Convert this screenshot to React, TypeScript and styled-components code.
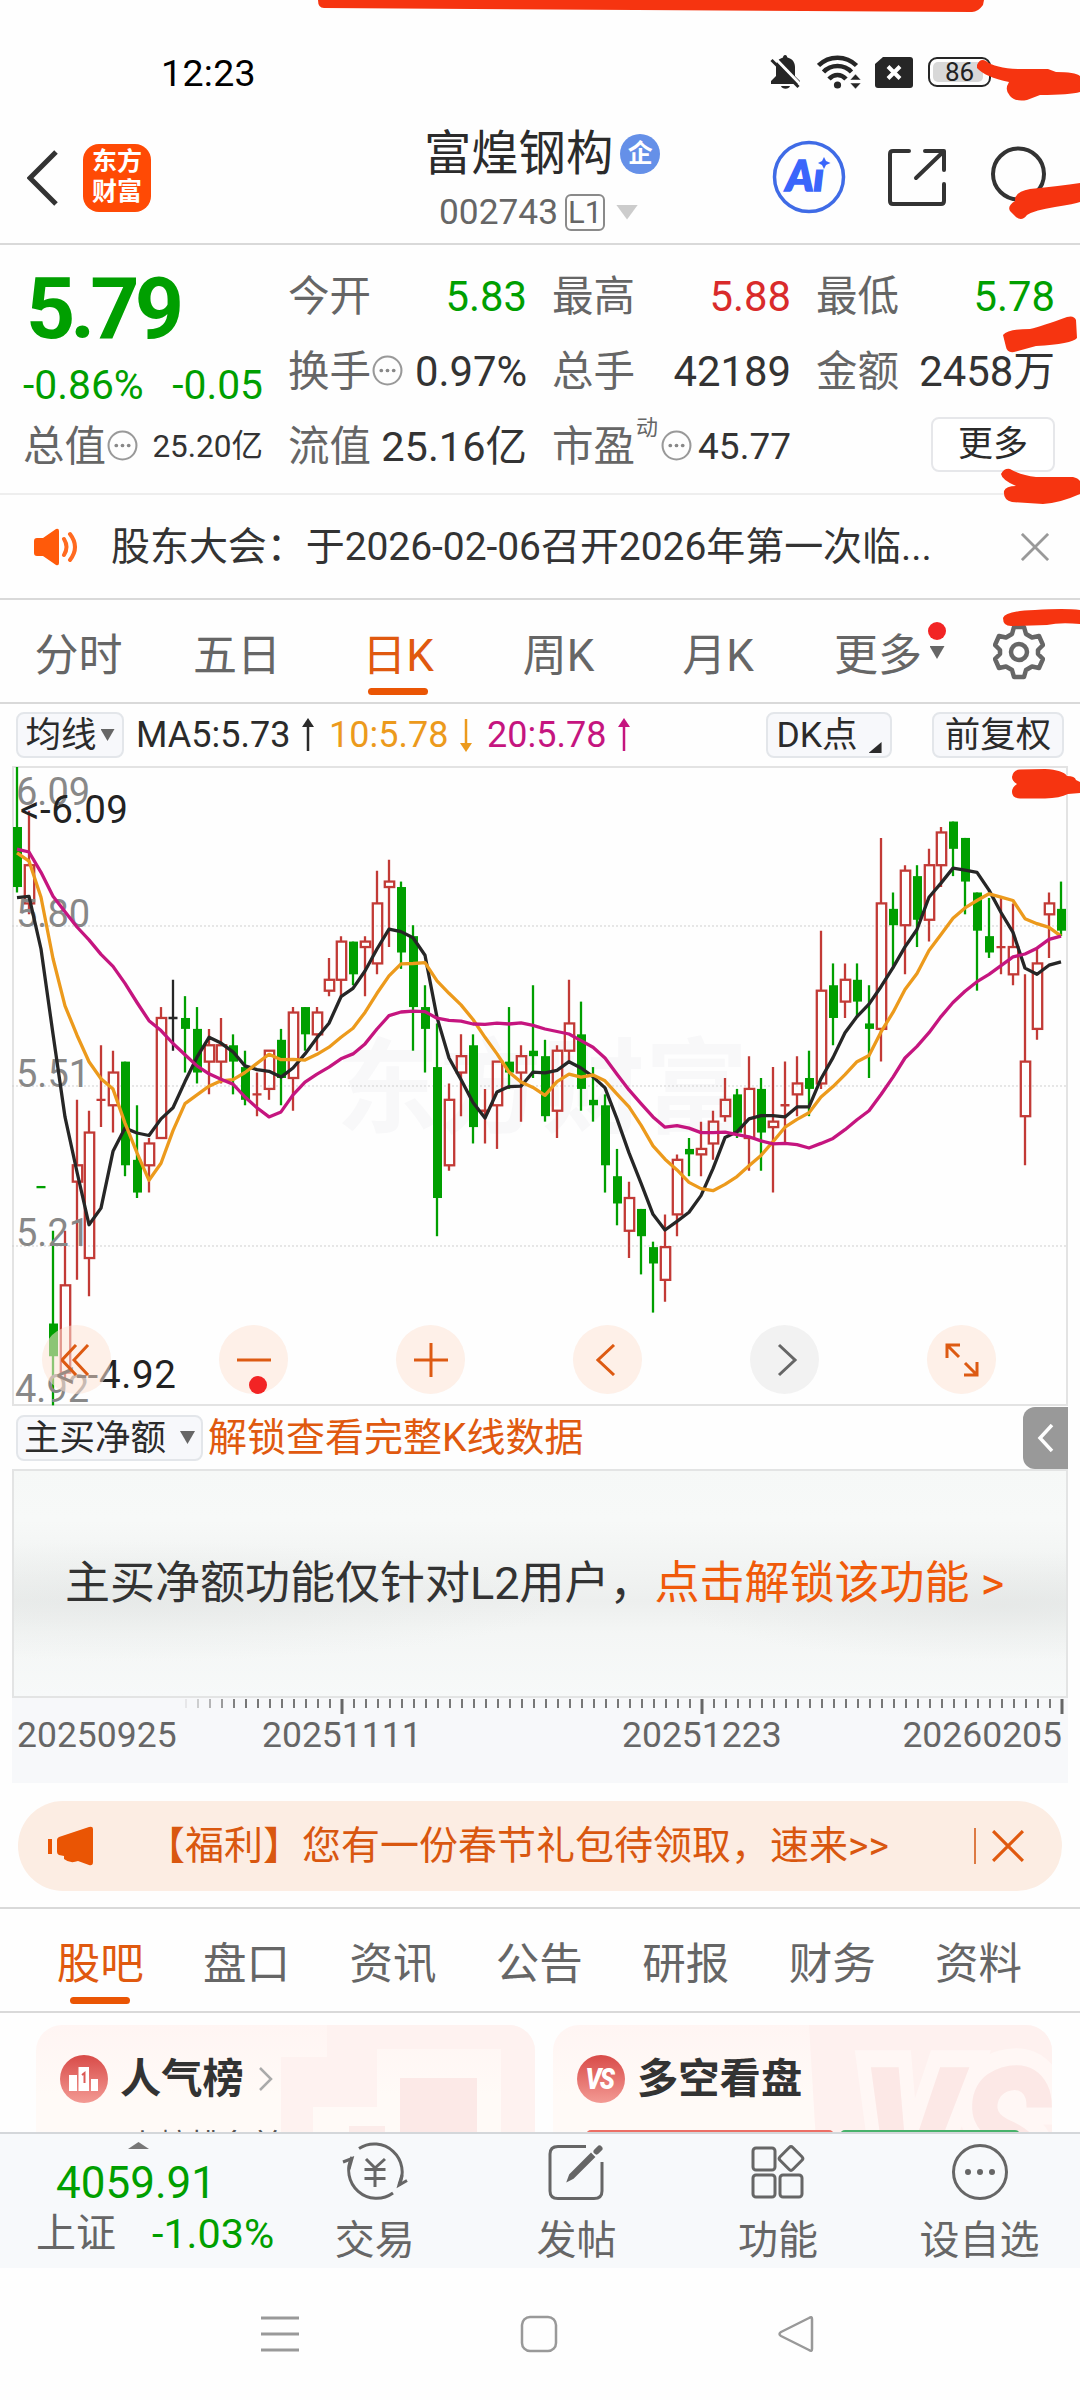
import React from 'react';
import styled, { createGlobalStyle } from 'styled-components';

const C = {
  ink: '#2b2b2b',
  text: '#333333',
  grey: '#666666',
  green: '#009f00',
  red: '#d92b2b',
  orange: '#e0590f',
  brand: '#ea5504',
  line: '#d9d9d9',
  candleRed: '#c23a36',
  ma5: '#262626',
  ma10: '#ec9a1c',
  ma20: '#c5157f',
  marker: '#f63410',
};

const Global = createGlobalStyle`
  *, *::before, *::after { box-sizing: border-box; }
  html, body { margin: 0; padding: 0; background: #fff; }
  body { font-family: Roboto, "Noto Sans CJK SC", sans-serif; color: ${C.text}; }
  svg { display: block; flex: none; }
`;

const Screen = styled.div`
  position: relative;
  width: 1080px;
  height: 2400px;
  overflow: hidden;
  background: #fefefe;
  display: flex;
  flex-direction: column;
  white-space: nowrap;
`;

/* ---------- status bar ---------- */
const StatusBar = styled.div`
  height: 110px;
  flex: none;
  padding: 36px 88px 0 161px;
  display: flex;
  align-items: center;
  justify-content: space-between;
`;
const Clock = styled.span`
  font-size: 37.5px;
  line-height: 44px;
  color: #000;
  letter-spacing: 0.3px;
`;
const StatusIcons = styled.div`
  display: flex;
  align-items: center;
  width: 222px;
  padding-bottom: 2px;
`;
const Battery = styled.span`
  width: 63px;
  height: 30px;
  margin-left: 15px;
  border: 2px solid #262626;
  border-radius: 9px;
  padding: 3px;
  display: flex;
`;
const BatteryFill = styled.span`
  width: 50px;
  border-radius: 5px;
  background: #d8d8d8;
  font-size: 26px;
  line-height: 21px;
  text-align: center;
  color: #222;
  padding-left: 3px;
`;

/* ---------- header ---------- */
const Header = styled.header`
  height: 135px;
  flex: none;
  border-bottom: 2px solid ${C.line};
  display: grid;
  grid-template-columns: 27px 56px 341px 300px 1fr;
  align-items: start;
`;
const HeaderCell = styled.div<{ $top: number }>`
  padding-top: ${(p) => p.$top}px;
`;
const Logo = styled.div`
  width: 68px;
  height: 68px;
  border-radius: 16px;
  background: #ff4a05;
  color: #fff;
  font-weight: 700;
  font-size: 25px;
  line-height: 30px;
  text-align: center;
  padding-top: 3px;
`;
const TitleBlock = styled.div`
  display: flex;
  flex-direction: column;
  padding-top: 17px;
`;
const TitleRow = styled.div`
  display: flex;
  align-items: center;
  height: 54px;
  font-size: 47.3px;
  line-height: 54px;
  color: ${C.ink};
`;
const EntBadge = styled.span`
  width: 40px;
  height: 40px;
  margin-left: 7px;
  border-radius: 50%;
  background: #6590e8;
  color: #fff;
  font-size: 25px;
  font-weight: 700;
  line-height: 39px;
  text-align: center;
`;
const CodeRow = styled.div`
  display: flex;
  align-items: center;
  height: 44px;
  margin-top: 9px;
  padding-left: 15px;
  font-size: 35.3px;
  color: ${C.grey};
  line-height: 44px;
`;
const LevelTag = styled.span`
  width: 40px;
  height: 37px;
  margin-left: 7px;
  margin-right: 11px;
  border: 2px solid #8a8a8a;
  border-radius: 6px;
  font-size: 31px;
  line-height: 34px;
  text-align: center;
`;
const Actions = styled.div`
  display: flex;
  align-items: flex-start;
  padding-left: 48px;
`;

const Tri = styled.i<{ $w: number; $h: number; $c: string; $up?: boolean; $ml?: number }>`
  width: ${(p) => p.$w}px;
  height: ${(p) => p.$h}px;
  margin-left: ${(p) => p.$ml || 0}px;
  flex: none;
  background: ${(p) => p.$c};
  clip-path: ${(p) => (p.$up ? 'polygon(50% 0, 100% 100%, 0 100%)' : 'polygon(0 0, 100% 0, 50% 100%)')};
`;

/* ---------- quote ---------- */
const Quote = styled.section`
  height: 250px;
  flex: none;
  border-bottom: 2px solid #eeeeee;
  padding: 14px 24px 0 23px;
  display: grid;
  grid-template-columns: 240px repeat(3, 239px);
  grid-template-rows: repeat(3, 75px);
  column-gap: 25px;
`;
const PriceCell = styled.div`
  grid-row: span 2;
  display: flex;
  flex-direction: column;
  color: ${C.green};
`;
const Price = styled.div`
  height: 99px;
  line-height: 99px;
  font-size: 86px;
  font-weight: 700;
  letter-spacing: -5px;
  padding-left: 3px;
`;
const Delta = styled.div`
  display: flex;
  justify-content: space-between;
  height: 54px;
  line-height: 54px;
  font-size: 40.8px;
`;
const Stat = styled.div`
  display: flex;
  align-items: center;
  justify-content: space-between;
`;
const StatLabel = styled.span`
  display: flex;
  align-items: center;
  font-size: 41.5px;
  line-height: 60px;
  color: ${C.grey};
`;
const Sup = styled.sup`
  font-size: 22px;
  line-height: 22px;
  margin: -38px 2px 0 1px;
  color: ${C.grey};
`;
const StatValue = styled.span<{ $c?: string; $s?: number }>`
  font-size: ${(p) => p.$s || 41.8}px;
  line-height: 60px;
  color: ${(p) => p.$c || C.text};
`;
const MoreButton = styled.button`
  width: 124px;
  height: 55px;
  margin-left: auto;
  margin-top: -4px;
  padding: 0;
  font: inherit;
  font-size: 35px;
  line-height: 49px;
  color: ${C.ink};
  background: #fff;
  border: 2px solid #e6e7ea;
  border-radius: 8px;
`;

/* ---------- notice ---------- */
const Notice = styled.section`
  height: 105px;
  flex: none;
  border-bottom: 2px solid ${C.line};
  padding: 0 31px 0 34px;
  display: flex;
  align-items: center;
`;
const NoticeText = styled.span`
  flex: 1;
  padding-left: 31px;
  font-size: 39px;
  line-height: 60px;
  letter-spacing: -0.06px;
`;

/* ---------- period tabs ---------- */
const PeriodTabs = styled.nav`
  height: 104px;
  flex: none;
  border-bottom: 2px solid ${C.line};
  display: flex;
  align-items: stretch;
`;
const Tab = styled.div<{ $w: number; $active?: boolean; $size?: number }>`
  position: relative;
  width: ${(p) => p.$w}px;
  flex: none;
  display: flex;
  flex-direction: column;
  align-items: center;
  justify-content: center;
  padding-top: 9px;
  font-size: ${(p) => p.$size || 44}px;
  line-height: 60px;
  color: ${(p) => (p.$active ? C.orange : C.grey)};
  &::after {
    content: '';
    display: ${(p) => (p.$active ? 'block' : 'none')};
    position: absolute;
    bottom: 7px;
    width: 60px;
    height: 7px;
    border-radius: 4px;
    background: ${C.brand};
  }
`;
const TabMarks = styled.span`
  position: absolute;
  left: 130px;
  top: 22px;
  display: flex;
  flex-direction: column;
  align-items: center;
  gap: 6px;
`;
const Dot = styled.i`
  width: 18px;
  height: 18px;
  border-radius: 50%;
  background: #f22424;
`;
const GearCell = styled.div`
  padding: 24px 0 0 35px;
`;

/* ---------- indicator bar ---------- */
const Indicators = styled.div`
  height: 62px;
  flex: none;
  padding: 0 16px;
  display: flex;
  align-items: center;
`;
const Chip = styled.span<{ $w: number; $ml?: number }>`
  width: ${(p) => p.$w}px;
  height: 46px;
  margin-left: ${(p) => p.$ml || 0}px;
  flex: none;
  display: flex;
  align-items: center;
  justify-content: center;
  background: #f7f8fb;
  border: 2px solid #e3e6ea;
  border-radius: 8px;
  font-size: 35.5px;
  line-height: 42px;
  color: ${C.ink};
`;
const MaText = styled.span<{ $c: string; $ml: number; $w: number }>`
  width: ${(p) => p.$w}px;
  margin-left: ${(p) => p.$ml}px;
  font-size: 36px;
  line-height: 44px;
  color: ${(p) => p.$c};
  display: flex;
  align-items: center;
  justify-content: space-between;
`;
const Corner = styled.i`
  width: 13px;
  height: 11px;
  align-self: flex-end;
  margin: 0 0 3px 11px;
  background: ${C.ink};
  clip-path: polygon(100% 0, 100% 100%, 0 100%);
`;

/* ---------- chart ---------- */
const ChartBox = styled.section`
  position: relative;
  width: 1056px;
  height: 640px;
  margin-left: 12px;
  flex: none;
`;
const Controls = styled.div`
  position: absolute;
  left: 30px;
  top: 559px;
  display: flex;
  gap: 108px;
`;
const RoundButton = styled.span<{ $grey?: boolean }>`
  position: relative;
  width: 69px;
  height: 69px;
  border-radius: 50%;
  background: ${(p) => (p.$grey ? '#f2f2f2' : 'rgba(253, 228, 214, 0.55)')};
  display: flex;
  align-items: center;
  justify-content: center;
`;
const ButtonDot = styled(Dot)`
  position: absolute;
  left: 30px;
  bottom: 0;
`;

/* ---------- sub chart ---------- */
const SubHeader = styled.div`
  height: 63px;
  flex: none;
  padding-left: 16px;
  padding-right: 12px;
  display: flex;
  align-items: center;
`;
const UnlockText = styled.span`
  flex: 1;
  margin-left: 5px;
  font-size: 39px;
  line-height: 56px;
  color: ${C.orange};
`;
const Drawer = styled.span`
  width: 45px;
  height: 62px;
  border-radius: 12px 0 0 12px;
  background: #999;
  display: flex;
  align-items: center;
  justify-content: center;
`;
const Locked = styled.div`
  height: 229px;
  flex: none;
  margin: 0 12px;
  padding-left: 51px;
  border: 2px solid #e3e4e4;
  background:
    radial-gradient(ellipse 420px 60px at 12% 58%, rgba(225, 228, 227, 0.5), rgba(225, 228, 227, 0)),
    radial-gradient(ellipse 320px 55px at 94% 60%, rgba(225, 228, 227, 0.6), rgba(225, 228, 227, 0)),
    linear-gradient(#f6f8f7, #f7f9f8 22%, #f1f3f2 45%, #edefee 58%, #f4f6f5 72%, #f7f9f9 100%);
  font-size: 45px;
  line-height: 225px;
`;
const LockedLink = styled.span`
  color: #f05a0a;
`;
const Axis = styled.div`
  height: 85px;
  flex: none;
  margin: 0 12px;
  background: #f7f8fa;
`;
const AxisLabels = styled.div`
  display: grid;
  grid-template-columns: 245px 360px 1fr 165px;
  padding-left: 5px;
  padding-right: 6px;
  margin-top: -12px;
  font-size: 35.5px;
  line-height: 60px;
  color: ${C.grey};
`;
const RightLabel = styled.span`
  text-align: right;
`;

/* ---------- promo ---------- */
const Promo = styled.div`
  height: 90px;
  flex: none;
  margin: 18px 18px 16px;
  padding: 0 38px 0 30px;
  border-radius: 45px;
  background: #fcede3;
  display: flex;
  align-items: center;
`;
const PromoText = styled.span`
  flex: 1;
  padding-left: 52px;
  font-size: 39px;
  line-height: 60px;
  color: #d9570f;
`;
const PromoRule = styled.i`
  width: 2px;
  height: 36px;
  margin-right: 16px;
  background: #dd7a44;
`;

const NewsTabs = styled.nav`
  height: 106px;
  flex: none;
  border-top: 2px solid ${C.line};
  border-bottom: 2px solid ${C.line};
  padding-left: 27px;
  display: flex;
`;

/* ---------- cards ---------- */
const Cards = styled.section`
  height: 119px;
  flex: none;
  padding: 12px 28px 0 36px;
  overflow: hidden;
  display: grid;
  grid-template-columns: 499px 499px;
  column-gap: 18px;
`;
const Card = styled.div`
  position: relative;
  height: 200px;
  overflow: hidden;
  border-radius: 26px;
  background: linear-gradient(#fff5f3, #fffaf7 35%);
`;
const CardArt = styled.svg`
  position: absolute;
  right: 0;
  top: 0;
`;
const CardHead = styled.div`
  position: relative;
  display: flex;
  align-items: center;
  height: 108px;
  padding-left: 24px;
  font-size: 41.3px;
  font-weight: 700;
  line-height: 60px;
`;
const CardIcon = styled.span`
  width: 48px;
  height: 48px;
  margin-right: 12px;
  border-radius: 50%;
  background: linear-gradient(#d84b48, #f39a94);
  display: flex;
  align-items: center;
  justify-content: center;
`;
const VsText = styled.b`
  color: #fff;
  font-size: 29px;
  font-style: italic;
  line-height: 48px;
  letter-spacing: -2px;
  padding-right: 4px;
  transform: scaleX(0.86);
`;
const CardHint = styled.div`
  position: relative;
  margin-top: -7px;
  padding-left: 92px;
  font-size: 31px;
  line-height: 40px;
  color: #555;
`;
const Bars = styled.div`
  position: relative;
  margin-top: -3px;
  display: flex;
  gap: 6px;
  padding-left: 33px;
`;
const Bar = styled.i<{ $w: number; $c: string }>`
  width: ${(p) => p.$w}px;
  height: 12px;
  border-radius: 5px 5px 0 0;
  background: ${(p) => p.$c};
`;

/* ---------- bottom ---------- */
const BottomBar = styled.footer`
  height: 136px;
  flex: none;
  background: #f7f9fb;
  border-top: 2px solid #d4d7da;
  display: grid;
  grid-template-columns: 274px repeat(4, 201.6px);
`;
const IndexCell = styled.div`
  display: flex;
  flex-direction: column;
  padding: 8px 0 0 36px;
`;
const IndexValue = styled.span`
  margin: 7px 0 0 20px;
  font-size: 44px;
  line-height: 55px;
  color: ${C.green};
`;
const IndexRow = styled.div`
  display: flex;
  gap: 36px;
  font-size: 40px;
  line-height: 46px;
  color: ${C.grey};
`;
const Down = styled.span`
  font-size: 41.3px;
  color: ${C.green};
`;
const ToolItem = styled.div`
  display: flex;
  flex-direction: column;
  align-items: center;
  padding-top: 5px;
  font-size: 40px;
  line-height: 60px;
  color: ${C.grey};
  svg { margin-bottom: 6px; }
`;
const NavBar = styled.div`
  flex: 1;
  padding: 47px 266px 0 261px;
  display: flex;
  justify-content: space-between;
  align-items: flex-start;
`;

const Scribbles = styled.svg`
  position: absolute;
  left: 0;
  top: 0;
  pointer-events: none;
`;

/* Candles: colour, high, body top, body bottom, low, in cents under the 6.09 ceiling. */
type Candle = [string, number, number, number, number];
const candles: Candle[] = [
  ['g', 0, 11, 22, 23], ['r', 8, 18, 25, 27], ['g', 77, 77, 77, 77], ['g', 85, 102, 108, 117],
  ['r', 85, 95, 111, 112], ['r', 61, 73, 76, 94], ['r', 63, 67, 90, 97], ['r', 51, 61, 61, 66],
  ['r', 52, 56, 62, 67], ['g', 54, 54, 73, 75], ['g', 62, 72, 78, 79], ['r', 68, 69, 73, 78],
  ['r', 44, 46, 68, 68], ['k', 39, 46, 46, 52], ['g', 42, 46, 48, 56], ['g', 44, 48, 56, 58],
  ['r', 48, 51, 54, 60], ['r', 46, 51, 54, 58], ['g', 49, 51, 54, 60], ['g', 52, 55, 61, 62],
  ['r', 56, 60, 60, 64], ['r', 52, 52, 59, 61], ['g', 48, 50, 57, 62], ['r', 44, 45, 57, 63],
  ['g', 44, 44, 49, 52], ['r', 44, 45, 49, 52], ['r', 35, 39, 41, 42], ['r', 31, 32, 39, 42],
  ['g', 32, 32, 38, 40], ['r', 31, 32, 33, 42], ['r', 19, 25, 36, 38], ['r', 17, 21, 22, 33],
  ['g', 21, 22, 34, 37], ['g', 29, 31, 44, 52], ['g', 40, 44, 48, 56], ['g', 47, 55, 79, 86],
  ['r', 58, 61, 73, 74], ['r', 49, 53, 56, 64], ['g', 49, 51, 66, 69], ['r', 59, 63, 63, 69],
  ['r', 54, 54, 62, 70], ['g', 44, 54, 56, 59], ['r', 51, 53, 56, 65], ['g', 40, 52, 53, 57],
  ['g', 50, 53, 64, 65], ['r', 51, 52, 63, 68], ['r', 39, 47, 52, 54], ['g', 43, 49, 59, 63],
  ['g', 55, 61, 62, 65], ['g', 60, 62, 73, 78], ['g', 70, 75, 80, 84], ['r', 76, 79, 85, 90],
  ['g', 81, 81, 86, 93], ['g', 87, 88, 91, 100], ['r', 82, 88, 94, 98], ['r', 71, 72, 82, 86],
  ['g', 68, 70, 71, 75], ['r', 65, 70, 71, 75], ['r', 63, 65, 69, 72], ['r', 57, 61, 64, 65],
  ['g', 59, 60, 67, 68], ['r', 53, 59, 68, 74], ['g', 57, 59, 67, 74], ['r', 55, 65, 66, 78],
  ['r', 54, 62, 62, 69], ['r', 53, 58, 60, 64], ['g', 52, 57, 59, 64], ['r', 30, 41, 58, 59],
  ['g', 36, 40, 46, 51], ['r', 36, 39, 43, 46], ['g', 36, 39, 43, 46], ['g', 40, 47, 48, 57],
  ['r', 13, 25, 48, 54], ['g', 23, 26, 29, 37], ['r', 18, 19, 29, 38], ['g', 18, 20, 28, 33],
  ['r', 15, 18, 28, 32], ['r', 11, 12, 18, 22], ['g', 10, 10, 15, 20], ['g', 13, 13, 21, 27],
  ['g', 23, 23, 30, 41], ['g', 24, 31, 34, 35], ['r', 24, 33, 33, 38], ['r', 25, 33, 38, 40],
  ['r', 38, 54, 64, 73], ['r', 33, 36, 48, 50], ['r', 23, 25, 27, 35], ['g', 21, 26, 30, 31],
];

/* Moving averages, on a scale where the plot runs from 16 to 1556. */
const ma5 = [331, 328, 455, 660, 860, 993, 1120, 1080, 943, 887, 899, 905, 865, 838, 775, 716, 668, 682, 703, 737, 746, 750, 764, 742, 708, 669, 634, 570, 550, 508, 455, 407, 413, 428, 470, 620, 718, 770, 825, 863, 800, 787, 786, 752, 754, 748, 727, 742, 763, 790, 865, 947, 1020, 1095, 1133, 1112, 1090, 1050, 985, 910, 896, 865, 857, 857, 860, 836, 836, 768, 717, 657, 618, 588, 546, 500, 450, 408, 330, 296, 260, 265, 270, 313, 367, 415, 501, 516, 494, 486];
const ma10 = [223, 243, 330, 478, 592, 663, 727, 768, 793, 875, 947, 1013, 972, 893, 828, 807, 786, 773, 770, 753, 731, 709, 722, 721, 723, 709, 692, 668, 646, 608, 562, 520, 491, 490, 488, 532, 562, 590, 625, 668, 708, 752, 776, 789, 808, 775, 757, 764, 759, 773, 805, 836, 880, 930, 962, 988, 1018, 1033, 1038, 1023, 1004, 978, 953, 920, 885, 866, 850, 812, 787, 758, 727, 712, 655, 608, 553, 514, 459, 420, 381, 356, 338, 322, 330, 338, 382, 394, 403, 424];
const ma20 = [214, 221, 270, 328, 365, 402, 433, 468, 497, 538, 584, 628, 652, 683, 710, 737, 756, 769, 781, 812, 838, 860, 848, 807, 776, 757, 740, 720, 708, 684, 648, 616, 607, 605, 606, 622, 627, 629, 636, 637, 634, 636, 633, 639, 648, 654, 660, 676, 692, 718, 757, 795, 828, 860, 885, 881, 887, 898, 898, 897, 903, 908, 918, 925, 924, 927, 935, 924, 912, 891, 867, 845, 806, 764, 718, 690, 657, 618, 584, 557, 534, 516, 495, 474, 467, 453, 432, 424];

const xAt = (i: number) => 5 + i * 12;
const yAt = (cents: number) => 1 + cents * 5.456;
const maPoints = (values: number[]) =>
  values.map((v, i) => `${xAt(i)},${(1 + (v - 16) / 2.4123).toFixed(1)}`).join(' ');

function CandleMark({ data, index }: { data: Candle; index: number }) {
  const [kind, high, top, bottom, low] = data;
  const x = xAt(index);
  const color = kind === 'g' ? C.green : kind === 'r' ? C.candleRed : C.ma5;
  if (top === bottom) {
    return (
      <g stroke={color} strokeWidth={2.3}>
        <path d={`M${x} ${yAt(high)}V${yAt(low)}M${x - 4.5} ${yAt(top)}h9`} />
      </g>
    );
  }
  const h = yAt(bottom) - yAt(top);
  if (kind === 'g') {
    return (
      <g>
        <path d={`M${x} ${yAt(high)}V${yAt(low)}`} stroke={color} strokeWidth={2.3} />
        <rect x={x - 4} y={yAt(top)} width={9} height={h} fill={color} />
      </g>
    );
  }
  return (
    <g stroke={color} strokeWidth={2.3} fill="none">
      <path d={`M${x} ${yAt(high)}V${yAt(top)}M${x} ${yAt(bottom)}V${yAt(low)}`} />
      <rect x={x - 4.2} y={yAt(top)} width={9.4} height={h} />
    </g>
  );
}

function Chart() {
  return (
    <ChartBox>
      <svg width="1056" height="640" viewBox="0 0 1056 640">
        <text x="324" y="359" fontSize="103" fontWeight="700" fill="#f8f8f9">东方财富</text>
        <rect x="1" y="1" width="1054" height="638" fill="none" stroke="#e3e3e3" strokeWidth="2" />
        {[160, 320, 480].map((y) => (
          <path key={y} d={`M0 ${y}H1056`} stroke="#cfcfcf" strokeWidth="1" strokeDasharray="2 2" />
        ))}
        {candles.map((c, i) => <CandleMark key={i} data={c} index={i} />)}
        <g fontSize="38" fill="#888">
          <text x="4" y="38.500">6.09</text>
          <text x="4" y="161">5.80</text>
          <text x="4" y="321">5.51</text>
          <text x="4" y="480">5.21</text>
          <text x="3" y="636">4.92</text>
        </g>
        <g fill="none" strokeWidth="3.300" strokeLinejoin="round">
          <polyline points={maPoints(ma5)} stroke={C.ma5} />
          <polyline points={maPoints(ma10)} stroke={C.ma10} />
          <polyline points={maPoints(ma20)} stroke={C.ma20} />
        </g>
        <g fontSize="38.500" fill="#222">
          <text x="8" y="57" textLength="108">&lt;-6.09</text>
          <text x="44" y="622" textLength="120">&lt;--4.92</text>
        </g>
      </svg>
      <Controls>
        <RoundButton>
          <svg width="32" height="32" viewBox="0 0 32 32" fill="none" stroke="#dd5a12" strokeWidth="3">
            <path d="M15 1L1 16L15 31M27 1L13 16L27 31" />
          </svg>
        </RoundButton>
        <RoundButton>
          <svg width="34" height="34" stroke="#dd5a12" strokeWidth="3"><path d="M0 17H34" /></svg>
          <ButtonDot />
        </RoundButton>
        <RoundButton>
          <svg width="34" height="34" stroke="#dd5a12" strokeWidth="3"><path d="M0 17H34M17 0V34" /></svg>
        </RoundButton>
        <RoundButton>
          <svg width="24" height="32" fill="none" stroke="#dd5a12" strokeWidth="3"><path d="M18 1L2 16L18 31" /></svg>
        </RoundButton>
        <RoundButton $grey>
          <svg width="16" height="32" overflow="visible" fill="none" stroke="#666" strokeWidth="3"><path d="M2 1L18 16L2 31" /></svg>
        </RoundButton>
        <RoundButton>
          <svg width="34" height="34" viewBox="0 0 34 34" fill="none" stroke="#dd5a12" strokeWidth="3">
            <path d="M2 15V2H15M2 2L14 14M32 19V32H19M32 32L20 20" />
          </svg>
        </RoundButton>
      </Controls>
    </ChartBox>
  );
}

const minorTicks = Array.from({ length: 74 }, (_, i) => 174 + i * 12);

const InfoIcon = styled.svg`
  width: 31px;
  height: 31px;
  margin: -3px 0 0 1px;
`;

const InfoDot = () => (
  <InfoIcon viewBox="0 0 30 30">
    <circle cx="15" cy="15" r="13.5" fill="none" stroke="#999" strokeWidth="2" />
    <g fill="#888"><circle cx="9" cy="15" r="1.8" /><circle cx="15" cy="15" r="1.8" /><circle cx="21" cy="15" r="1.8" /></g>
  </InfoIcon>
);

const Arrow = ({ color, down }: { color: string; down?: boolean }) => (
  <svg width="12" height="34" viewBox="0 0 12 34">
    <g transform={down ? 'rotate(180 6 17)' : undefined}>
      <path d="M6 4V33" stroke={color} strokeWidth="2.5" />
      <path d="M6 0L12 9H0Z" fill={color} />
    </g>
  </svg>
);

const Cross = ({ size, color }: { size: number; color: string }) => (
  <svg width={size} height={size} viewBox="0 0 30 30" stroke={color} strokeWidth="3">
    <path d="M1 1L29 29M29 1L1 29" />
  </svg>
);

const WifiIcon = styled.svg`
  margin-left: 15px;
`;
const SimIcon = styled.svg`
  margin-left: 14px;
`;
const AiIcon = styled.svg`
  margin-top: 30px;
`;
const ShareIcon = styled.svg`
  margin: 38px 0 0 42px;
`;
const SearchIcon = styled.svg`
  margin: 36px 0 0 44px;
`;
const MoreChevron = styled.svg`
  margin-left: 14px;
`;

export default function App() {
  return (
    <>
      <Global />
      <Screen>
        <StatusBar>
          <Clock>12:23</Clock>
          <StatusIcons>
            <svg width="32" height="34" viewBox="0 0 32 34">
              <path d="M15 0C17 0 17 2 17.500 2.500C23 4 25 8 25 12V21L30 26V29H1V26L6 21V12C6 7 8 4 13 2.500C13 1 14 0 15 0Z" fill="#262626" />
              <path d="M11 31H20C19 34.500 12 34.500 11 31Z" fill="#262626" />
              <path d="M4 2L31 30" stroke="#fff" strokeWidth="3" />
              <path d="M1.500 5L28.500 32" stroke="#262626" strokeWidth="3" />
            </svg>
            <WifiIcon width="44" height="34" viewBox="0 0 44 34">
              <g fill="none" stroke="#262626" strokeWidth="4.500">
                <path d="M1.500 10.500C12 0 29 0 39.500 10.500" />
                <path d="M6.500 17C14 9 27 9 34.500 17" />
                <path d="M12 24C17 18.500 24 18.500 29 24" />
              </g>
              <circle cx="20.500" cy="30" r="3.600" fill="#262626" />
              <path d="M38.500 19L44 25H33ZM38.500 34L44 28H33Z" fill="#262626" stroke="#fff" strokeWidth="0.500" />
            </WifiIcon>
            <SimIcon width="38" height="31" viewBox="0 0 38 31">
              <path d="M8 0H35Q38 0 38 3V28Q38 31 35 31H3Q0 31 0 28V7Z" fill="#262626" />
              <path d="M13 9.500L25 21.500M25 9.500L13 21.500" stroke="#fff" strokeWidth="4" />
            </SimIcon>
            <Battery><BatteryFill>86</BatteryFill></Battery>
          </StatusIcons>
        </StatusBar>

        <Header>
          <i />
          <HeaderCell $top={40}>
            <svg width="32" height="56" viewBox="0 0 32 56" fill="none" stroke="#333" strokeWidth="5">
              <path d="M29 2L3 28L29 54" />
            </svg>
          </HeaderCell>
          <HeaderCell $top={34}><Logo>东方<br />财富</Logo></HeaderCell>
          <TitleBlock>
            <TitleRow>富煌钢构<EntBadge>企</EntBadge></TitleRow>
            <CodeRow>002743<LevelTag>L1</LevelTag><Tri $w={22} $h={15} $c="#cccccc" /></CodeRow>
          </TitleBlock>
          <Actions>
            <AiIcon width="74" height="74" viewBox="0 0 74 74">
              <circle cx="37" cy="37" r="34.500" fill="none" stroke="#3f6be6" strokeWidth="3.500" />
              <text x="14" y="51" fontFamily="Lato, sans-serif" fontSize="42" fontWeight="900" fontStyle="italic" fill="#3a66fb" stroke="#3a66fb" strokeWidth="1.600">Ai</text>
              <rect x="43" y="15" width="18" height="14.500" fill="#fefefe" />
              <path d="M52 17L54 21L58.500 23L54 25L52 29L50 25L46 23L50 21Z" fill="#3a66fb" />
            </AiIcon>
            <ShareIcon width="58" height="58" viewBox="0 0 58 58" fill="none" stroke="#333" strokeWidth="4" strokeLinecap="round" strokeLinejoin="round">
              <path d="M21 3H5Q2 3 2 6V53Q2 56 5 56H53Q56 56 56 53V36" />
              <path d="M37 3H56V22M55 4L28 30" />
            </ShareIcon>
            <SearchIcon width="60" height="60" viewBox="0 0 60 60" fill="none" stroke="#333" strokeWidth="4">
              <circle cx="28.500" cy="28" r="25.500" />
              <path d="M46 46L58 58" />
            </SearchIcon>
          </Actions>
        </Header>

        <Quote>
          <PriceCell>
            <Price>5.79</Price>
            <Delta><span>-0.86%</span><span>-0.05</span></Delta>
          </PriceCell>
          <Stat><StatLabel>今开</StatLabel><StatValue $c={C.green}>5.83</StatValue></Stat>
          <Stat><StatLabel>最高</StatLabel><StatValue $c={C.red}>5.88</StatValue></Stat>
          <Stat><StatLabel>最低</StatLabel><StatValue $c={C.green}>5.78</StatValue></Stat>
          <Stat><StatLabel>换手<InfoDot /></StatLabel><StatValue>0.97%</StatValue></Stat>
          <Stat><StatLabel>总手</StatLabel><StatValue>42189</StatValue></Stat>
          <Stat><StatLabel>金额</StatLabel><StatValue>2458万</StatValue></Stat>
          <Stat><StatLabel>总值<InfoDot /></StatLabel><StatValue $s={31.5}>25.20亿</StatValue></Stat>
          <Stat><StatLabel>流值</StatLabel><StatValue $s={41.5}>25.16亿</StatValue></Stat>
          <Stat><StatLabel>市盈<Sup>动</Sup><InfoDot /></StatLabel><StatValue $s={37}>45.77</StatValue></Stat>
          <Stat><MoreButton>更多</MoreButton></Stat>
        </Quote>

        <Notice>
          <svg width="46" height="38" viewBox="0 0 46 38">
            <path d="M0 13Q0 10 3 10H9L22 1Q25 0 25 3V35Q25 38 22 37L9 28H3Q0 28 0 25Z" fill="#ff5a0a" />
            <path d="M30 11Q35 19 30 27M36 6Q46 19 36 32" fill="none" stroke="#ff6a20" strokeWidth="4" strokeLinecap="round" />
          </svg>
          <NoticeText>股东大会：于2026-02-06召开2026年第一次临...</NoticeText>
          <Cross size={28} color="#999" />
        </Notice>

        <PeriodTabs>
          <Tab $w={157}>分时</Tab>
          <Tab $w={160}>五日</Tab>
          <Tab $w={162} $active>日K</Tab>
          <Tab $w={159}>周K</Tab>
          <Tab $w={160}>月K</Tab>
          <Tab $w={160}>更多<TabMarks><Dot /><Tri $w={15} $h={13} $c="#666" /></TabMarks></Tab>
          <GearCell>
            <svg width="52" height="56" viewBox="0 0 52 56" fill="none" stroke="#666" strokeWidth="4.500" strokeLinejoin="round">
              <path d="M21 3H31L33 10L39 13.500L46 12L50 21L45 26V30L50 35L46 44L39 42.500L33 46L31 53H21L19 46L13 42.500L6 44L2 35L7 30V26L2 21L6 12L13 13.500L19 10Z" />
              <circle cx="26" cy="28" r="8" />
            </svg>
          </GearCell>
        </PeriodTabs>

        <Indicators>
          <Chip $w={108}>均线<Tri $w={14} $h={12} $c="#666" $ml={4} /></Chip>
          <MaText $c={C.ink} $ml={12} $w={178}>MA5:5.73<Arrow color={C.ink} /></MaText>
          <MaText $c={C.ma10} $ml={15} $w={143}>10:5.78<Arrow color={C.ma10} down /></MaText>
          <MaText $c={C.ma20} $ml={15} $w={143}>20:5.78<Arrow color={C.ma20} /></MaText>
          <Chip $w={126} $ml={136}>DK点<Corner /></Chip>
          <Chip $w={132} $ml={40}>前复权</Chip>
        </Indicators>

        <Chart />

        <SubHeader>
          <Chip $w={187}>主买净额<Tri $w={15} $h={13} $c="#666" $ml={14} /></Chip>
          <UnlockText>解锁查看完整K线数据</UnlockText>
          <Drawer>
            <svg width="18" height="28" fill="none" stroke="#fff" strokeWidth="3.500"><path d="M15 1L3 14L15 27" /></svg>
          </Drawer>
        </SubHeader>
        <Locked>主买净额功能仅针对L2用户，<LockedLink>点击解锁该功能 &gt;</LockedLink></Locked>
        <Axis>
          <svg width="1056" height="19">
            {minorTicks.map((x, i) => (
              <path key={x} d={`M${x} 1V10`} stroke="#777" strokeWidth="2" opacity={Math.min(1, 0.12 + i * 0.2)} />
            ))}
            <path d="M330 1V16M690 1V16M1050 1V16" stroke="#666" strokeWidth="3" />
          </svg>
          <AxisLabels>
            <span>20250925</span><span>20251111</span><span>20251223</span><RightLabel>20260205</RightLabel>
          </AxisLabels>
        </Axis>

        <Promo>
          <svg width="46" height="40" viewBox="0 0 46 40" fill={C.brand}>
            <path d="M0 13H4V28H0ZM9 14Q9 12 11 11L41 1Q45 0 45 3V36Q45 40 41 39L30 35Q22 38 16 33V30L11 29Q9 28 9 26Z" />
          </svg>
          <PromoText>【福利】您有一份春节礼包待领取，速来&gt;&gt;</PromoText>
          <PromoRule />
          <Cross size={32} color="#e0590f" />
        </Promo>

        <NewsTabs>
          <Tab $w={146.4} $size={43.500} $active>股吧</Tab>
          {['盘口', '资讯', '公告', '研报', '财务', '资料'].map((t) => (
            <Tab key={t} $w={146.4} $size={43.500}>{t}</Tab>
          ))}
        </NewsTabs>

        <Cards>
          <Card>
            <CardArt width="260" height="200" viewBox="0 0 260 200">
              <path d="M52 0H260V200H226V24H102V82H38V200H6V32H52Z" fill="#fef2f0" />
              <path d="M125 53H202V200H125Z" fill="#fce9e7" />
              <path d="M74 101H110V200H74Z" fill="#fcecea" />
            </CardArt>
            <CardHead>
              <CardIcon>
                <svg width="30" height="28" viewBox="0 0 30 28">
                  <path d="M0 10H8V26H0ZM9.500 2H20V26H9.500ZM22 14H29V26H22Z" fill="#fff" />
                  <path d="M13 10L15.500 8V18" stroke="#dc5a56" strokeWidth="2" fill="none" />
                </svg>
              </CardIcon>
              人气榜
              <MoreChevron width="16" height="26" fill="none" stroke="#aaa" strokeWidth="2.500"><path d="M2 2L13 13L2 24" /></MoreChevron>
            </CardHead>
            <CardHint>上榜排名前三</CardHint>
          </Card>
          <Card>
            <CardArt width="243" height="200" viewBox="0 0 243 200">
              <path d="M0 0H243V200H12Z" fill="#fef1ef" />
              <text x="52" y="178" fontSize="190" fontStyle="italic" fontWeight="900" fill="#fce8e6" stroke="#fff7f5" strokeWidth="34" paintOrder="stroke" textLength="190" lengthAdjust="spacingAndGlyphs">VS</text>
            </CardArt>
            <CardHead><CardIcon><VsText>VS</VsText></CardIcon>多空看盘</CardHead>
            <Bars><Bar $w={248} $c="#ec6f65" /><Bar $w={180} $c="#48b26b" /></Bars>
          </Card>
        </Cards>

        <BottomBar>
          <IndexCell>
            <Tri $w={21} $h={7} $c="#777" $ml={92} $up />
            <IndexValue>4059.91</IndexValue>
            <IndexRow>上证<Down>-1.03%</Down></IndexRow>
          </IndexCell>
          <ToolItem>
            <svg width="66" height="66" viewBox="0 0 66 66" fill="none" stroke="#666" strokeWidth="3">
              <path d="M17 9.500A28 28 0 0 1 57 46M51 54A28 28 0 0 1 10 18" />
              <path d="M1 23L10 19.500L7 30M65 41.500L57 46L60 36" />
              <path d="M24 20L33 29L43 20M33 29V48M22.500 30.500H43.500M22.500 39.500H43.500" />
            </svg>
            交易
          </ToolItem>
          <ToolItem>
            <svg width="56" height="66" viewBox="0 0 56 66" fill="none" stroke="#666" strokeWidth="3">
              <path d="M38 7.500H10Q2 7.500 2 15V52Q2 59.500 10 59.500H46Q54 59.500 54 52V23" />
              <path d="M22 36L43 15L46 18L25 39L20 41.500Z" fill="#666" strokeWidth="2" />
              <path d="M48.500 12.500L51.500 9.500" strokeWidth="6" strokeLinecap="round" />
            </svg>
            发帖
          </ToolItem>
          <ToolItem>
            <svg width="54" height="66" viewBox="0 0 54 66" fill="none" stroke="#666" strokeWidth="3">
              <rect x="2" y="9" width="22" height="22" rx="3" />
              <rect x="2" y="36" width="22" height="22" rx="3" />
              <rect x="29" y="36" width="22" height="22" rx="3" />
              <rect x="31" y="10.500" width="18" height="18" rx="2.500" transform="rotate(45 40 19.500)" />
            </svg>
            功能
          </ToolItem>
          <ToolItem>
            <svg width="58" height="66" viewBox="0 0 58 66">
              <circle cx="29" cy="33" r="26.500" fill="none" stroke="#666" strokeWidth="3" />
              <g fill="#666"><circle cx="17" cy="33" r="3" /><circle cx="29" cy="33" r="3" /><circle cx="41" cy="33" r="3" /></g>
            </svg>
            设自选
          </ToolItem>
        </BottomBar>

        <NavBar>
          <svg width="38" height="38" stroke="#999" strokeWidth="3"><path d="M0 3H38M0 19H38M0 35H38" /></svg>
          <svg width="38" height="38" fill="none" stroke="#999" strokeWidth="2.500"><rect x="2" y="2" width="34" height="34" rx="8" /></svg>
          <svg width="36" height="38" fill="none" stroke="#999" strokeWidth="2.500" strokeLinejoin="round">
            <path d="M34 4V34Q34 37 31 35L3 21Q0 19 3 17L31 3Q34 1 34 4Z" />
          </svg>
        </NavBar>

        <Scribbles width="1080" height="820" viewBox="0 0 1080 820" fill={C.marker}>
          <path d="M318 0Q318 8 324 8L972 12Q978 12 983 5L984 0Z" />
          <path d="M977 65Q980 58 986 61Q995 68 1018 69L1048 69L1056 72Q1075 72 1080 76V92Q1070 95 1040 95L1027 100Q1015 102 1010 96Q1004 90 1009 82Q985 77 977 68Z" />
          <path d="M1080 183Q1060 186 1030 189Q1014 192 1015 201Q1007 206 1010 211L1016 217Q1022 222 1027 215Q1035 210 1055 207Q1075 204 1080 202Z" />
          <path d="M1003 335Q1008 329 1030 329Q1042 326 1067 317Q1074 315 1076 320L1077 338Q1072 344 1036 346L1014 352Q1007 353 1006 347Z" />
          <path d="M1001 474Q1004 468 1010 469Q1020 475 1036 477L1073 477Q1078 478 1080 481V494Q1060 503 1043 504L1012 502Q1003 500 1004 491Q1006 486 1016 486Q1002 480 1001 474Z" />
          <path d="M1003 618Q1005 611 1035 610Q1065 608 1080 610V624Q1060 622 1047 625L1013 626Q1003 627 1003 618Z" />
          <path d="M1012 777Q1013 770 1020 769.500L1045 769Q1063 770 1067 776Q1075 776 1076 780L1080 782V793L1068 794Q1060 798 1045 798.500L1020 798.500Q1012 798 1012 792Q1012 787 1017 784Q1012 781 1012 777Z" />
        </Scribbles>
      </Screen>
    </>
  );
}
